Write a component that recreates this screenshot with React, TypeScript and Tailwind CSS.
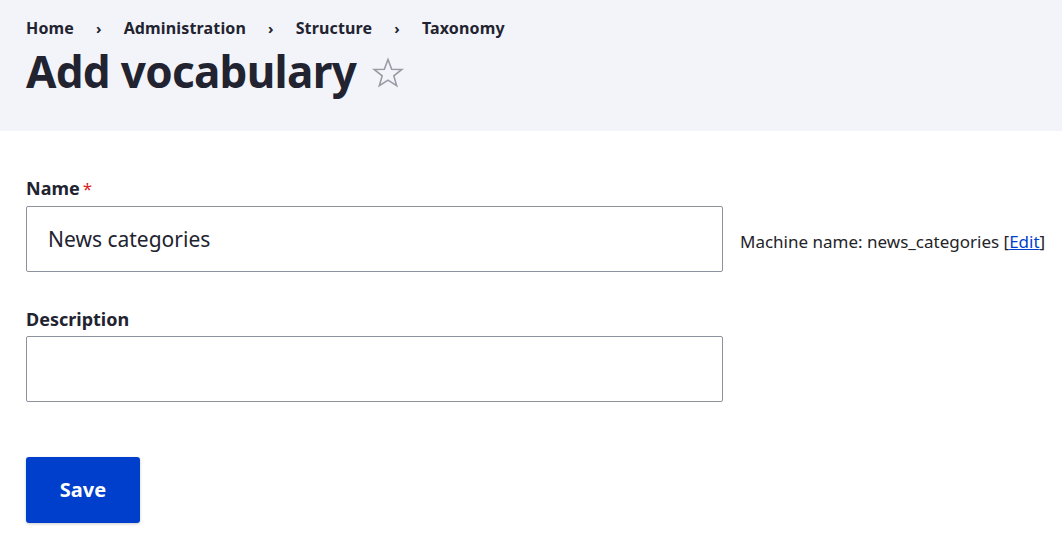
import type { ReactNode } from 'react'

const crumbs = ['Home', 'Administration', 'Structure', 'Taxonomy']

function Field({ label, required, children }: { label: string; required?: boolean; children: ReactNode }) {
  return <div className="flex flex-col">
    <label className="mb-[5px] flex items-baseline text-[18px] font-bold leading-[24px] text-[#222330]">
      {label}
      {required && <span className="ml-[3px] text-[17px] font-normal text-[#dc2323]">*</span>}
    </label>
    {children}
  </div>
}

export default function App() {
  return <div className="min-h-[544px] bg-white text-[#222330]" style={{ fontFamily: '"Noto Sans", "Open Sans", sans-serif' }}>
    <header className="h-[131px] bg-[#f3f4f9] px-[26px] pt-[16px]">
      <nav className="flex items-center text-[16px] font-bold leading-[24px] tracking-[0.15px]">
        {crumbs.map((c, i) => <span key={c} className="flex items-center">
          {i > 0 && <span className="mx-[22px] text-[15px] font-bold">›</span>}
          <a className="text-[#222330]">{c}</a>
        </span>)}
      </nav>
      <div className="mt-[2px] flex items-center">
        <h1 className="text-[44px] font-bold leading-[58px] tracking-[-0.7px]">Add vocabulary</h1>
        <svg width="34" height="34" viewBox="0 0 24 24" className="ml-[15px] mt-[4px]">
          <polygon points="12,2.5 14.6,9.3 21.8,9.5 16.1,14 18.1,21 12,17 5.9,21 7.9,14 2.2,9.5 9.4,9.3" fill="none" stroke="#989aa4" strokeWidth="1.1" strokeLinejoin="miter" />
        </svg>
      </div>
    </header>
    <main className="px-[26px] pt-[45px]">
      <Field label="Name" required>
        <div className="flex items-center">
          <input defaultValue="News categories" className="h-[66px] w-[697px] shrink-0 rounded-[2px] border border-[#8e929c] px-[21px] text-[21px] text-[#222330] outline-none" />
          <span className="ml-[17px] mt-[6px] whitespace-nowrap text-[17px] text-[#232429]">Machine name: news_categories [<a className="text-[#003ecc] underline">Edit</a>]</span>
        </div>
      </Field>
      <div className="mt-[35px]">
        <Field label="Description">
          <input className="h-[66px] w-[697px] rounded-[2px] border border-[#8e929c] px-[21px] text-[21px] outline-none" />
        </Field>
      </div>
      <button className="mt-[55px] h-[66px] w-[114px] rounded-[3px] bg-[#003ecc] text-[20px] font-bold text-white shadow-[0_1px_3px_rgba(0,0,0,0.2)]">Save</button>
    </main>
  </div>
}
